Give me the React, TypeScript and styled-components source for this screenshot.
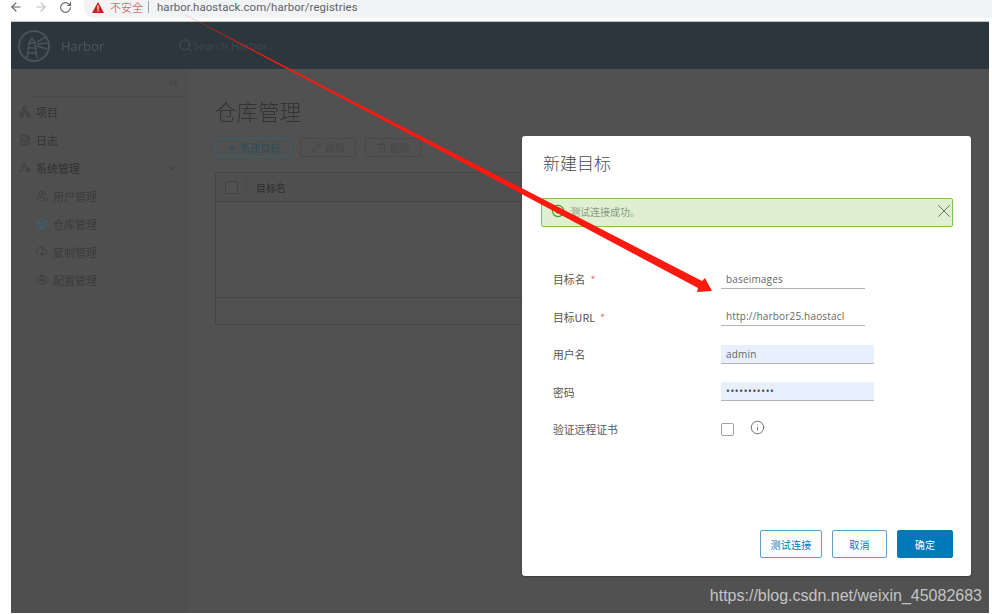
import React from 'react';
import styled, { createGlobalStyle } from 'styled-components';
import { ArrowLeft, ArrowRight, RotateCw, Search, ChevronsLeft, ChevronDown, Plus, Pencil, Trash2, X, Info, Network, FileText, Users, Box, CloudUpload, Settings, UserCog } from 'lucide-react';

const GlobalStyle = createGlobalStyle`
  html, body { margin: 0; padding: 0; background: #fff; }
  body { font-family: "Noto Sans CJK SC", "Noto Sans", sans-serif; overflow: hidden; }
  * { box-sizing: border-box; }
`;

const Screen = styled.div`
  position: relative;
  width: 992px;
  height: 614px;
  background: #fff;
  overflow: hidden;
`;

const BrowserBar = styled.div`
  display: flex;
  align-items: flex-start;
  height: 21px;
  padding-left: 9px;
  color: #5f6368;
`;

const NavButton = styled.span<{ $dim?: boolean }>`
  display: flex;
  width: 25px;
  height: 14px;
  align-items: center;
  color: ${(p) => (p.$dim ? '#bcbfc2' : '#5f6368')};
`;

const UrlPill = styled.div`
  display: flex;
  align-items: center;
  flex: 1;
  height: 18px;
  padding: 0 0 4px 8px;
  background: #f1f3f4;
  border-radius: 0 0 0 10px;
`;

const Warning = styled.span`
  color: #c5423e;
  font-size: 11px;
  font-weight: 300;
  margin-left: 6px;
`;

const UrlDivider = styled.span`
  width: 1px;
  height: 12px;
  margin: 0 8px 0 5px;
  background: #9aa0a6;
`;

const UrlText = styled.span`
  font-family: "Roboto", sans-serif;
  font-size: 11.4px;
  letter-spacing: 0.1px;
  color: #5f6368;
`;

const Frame = styled.div`
  height: 592px;
  margin: 0 3px 0 11px;
  background: #515151;
  border-top: 1px solid #c4c4c4;
  filter: blur(0.4px);
`;

const Header = styled.div`
  display: flex;
  align-items: center;
  height: 47px;
  padding-left: 6px;
  background: #2c373d;
  color: #4a5357;
`;

const Brand = styled.span`
  font-family: "Open Sans", sans-serif;
  font-size: 13px;
  margin-left: 10px;
  width: 117px;
  color: #4e565a;
`;

const SearchHint = styled.span`
  font-family: "Open Sans", sans-serif;
  font-size: 11px;
  color: #3e484e;
`;

const Body = styled.div`
  display: flex;
  height: 544px;
`;

const Sidebar = styled.div`
  width: 176px;
  height: 100%;
  background: #4f4f4f;
  border-right: 1px solid #4c4c4c;
  font-size: 11px;
  color: #323232;
`;

const Collapse = styled.div`
  display: flex;
  justify-content: flex-end;
  height: 28px;
  padding: 7px 6px 0 0;
  border-bottom: 1px solid #4a4a4a;
  margin-left: 16px;
  color: #363636;
`;

const NavList = styled.div`
  display: flex;
  flex-direction: column;
  padding-top: 0.5px;
`;

const NavItem = styled.div<{ $sub?: boolean }>`
  display: flex;
  align-items: center;
  gap: 5px;
  height: 28px;
  padding-left: ${(p) => (p.$sub ? '25px' : '8px')};
  color: ${(p) => (p.$sub ? '#3b3b3b' : '#323232')};
  svg { flex: none; color: #3c3c3c; }
`;

const NavCaret = styled.span`
  display: flex;
  margin-left: auto;
  padding-right: 8px;
`;

const Main = styled.div`
  flex: 1;
  padding: 27px 0 0 28px;
`;

const Title = styled.h1`
  margin: 0 0 12px;
  font-size: 21.5px;
  font-weight: 300;
  line-height: 30px;
  color: #333;
`;

const Toolbar = styled.div`
  display: flex;
  gap: 9px;
`;

const ToolButton = styled.span<{ $on?: boolean }>`
  display: flex;
  align-items: center;
  justify-content: center;
  gap: 3px;
  width: ${(p) => (p.$on ? '76px' : '56px')};
  height: 19px;
  border: 1px solid ${(p) => (p.$on ? '#38606f' : '#484848')};
  border-radius: 2px;
  font-size: 10px;
  color: ${(p) => (p.$on ? '#2c4e5c' : '#464646')};
`;

const Grid = styled.div`
  width: 700px;
  height: 153px;
  margin-top: 15px;
  border: 1px solid #474747;
  border-radius: 2px;
  border-right: 0;
`;

const GridHead = styled.div`
  display: flex;
  align-items: center;
  height: 29px;
  padding-left: 9px;
  background: #4f4f4f;
  border-bottom: 1px solid #464646;
  font-size: 10px;
  font-weight: 500;
  color: #333;
`;

const HeadDivider = styled.span`
  width: 1px;
  height: 18px;
  margin: 0 9px 0 8px;
  background: #484848;
`;

const HeadCheck = styled.span`
  width: 13px;
  height: 13px;
  border: 1px solid #414141;
  border-radius: 2px;
  background: #515151;
`;

const GridBody = styled.div`
  height: 96px;
  border-bottom: 1px solid #464646;
`;

const Dialog = styled.div`
  position: absolute;
  left: 522px;
  top: 136px;
  width: 449px;
  height: 440px;
  display: flex;
  flex-direction: column;
  padding: 15px 18px 18px 19px;
  background: #fff;
  border-radius: 3px;
  box-shadow: 0 1px 2px rgba(0, 0, 0, 0.3);
`;

const DialogTitle = styled.h2`
  margin: 0 0 23px 2px;
  font-size: 17px;
  font-weight: 300;
  line-height: 24px;
  color: #4a4a4a;
`;

const Alert = styled.div`
  display: flex;
  align-items: center;
  height: 29px;
  padding: 0 0 3px 9px;
  background: #dff0d0;
  border: 1px solid #7fc450;
  border-radius: 2px;
  font-size: 10px;
  color: #8a9a84;
  svg { flex: none; }
`;

const AlertText = styled.span`
  flex: 1;
  margin-left: 5px;
`;

const AlertClose = styled.span`
  display: flex;
  margin-right: -3px;
  color: #666;
`;

const Form = styled.div`
  display: flex;
  flex-direction: column;
  margin-top: 33.5px;
  padding-left: 12px;
`;

const Row = styled.div`
  display: flex;
  align-items: center;
  height: 37.5px;
  font-size: 10.8px;
  color: #565656;
`;

const Label = styled.label`
  width: 168px;
`;

const Star = styled.span`
  margin-left: 5px;
  color: #e8796c;
`;

const Input = styled.div<{ $filled?: boolean }>`
  display: flex;
  align-items: center;
  width: ${(p) => (p.$filled ? '153px' : '144px')};
  height: 19px;
  padding-left: 5px;
  background: ${(p) => (p.$filled ? '#e8f0fe' : '#fff')};
  border-bottom: 1px solid #b3b3b3;
  font-family: "Open Sans", sans-serif;
  font-size: 10px;
  letter-spacing: 0.17px;
  color: #666;
`;

const PasswordDots = styled.span`
  letter-spacing: 0.65px;
  color: #444;
`;

const Check = styled.span`
  width: 13px;
  height: 13px;
  border: 1px solid #a0a0a0;
  border-radius: 2px;
`;

const InfoMark = styled.span`
  display: flex;
  margin: -4px 0 0 16px;
  color: #555;
`;

const Footer = styled.div`
  display: flex;
  justify-content: flex-end;
  gap: 10px;
  margin-top: auto;
`;

const FootButton = styled.span<{ $primary?: boolean; $width: number }>`
  display: flex;
  align-items: center;
  justify-content: center;
  width: ${(p) => p.$width}px;
  height: 28px;
  border: 1px solid ${(p) => (p.$primary ? '#0079b8' : '#5ba3cc')};
  border-radius: 2px;
  background: ${(p) => (p.$primary ? '#0079b8' : '#fff')};
  color: ${(p) => (p.$primary ? '#fff' : '#0079b8')};
  font-size: 10px;
  letter-spacing: 0.3px;
`;

const Watermark = styled.div`
  position: absolute;
  right: 10px;
  bottom: 9px;
  font-family: "Liberation Sans", sans-serif;
  font-size: 16px;
  color: #c4c4c4;
`;

const ArrowLayer = styled.svg`
  position: absolute;
  left: 0;
  top: 0;
`;

const HarborLogo = () => (
  <svg width="34" height="34" viewBox="0 0 34 34" fill="none" stroke="currentColor">
    <circle cx="17" cy="17" r="15" strokeWidth="2" />
    <path d="M10 29l2-15h6l2 15M12 14l3-5 3 5M11.5 19h7M11 24h8" strokeWidth="1.5" />
    <path d="M20 13l9-5M20 15l11-1M20 17l10 3" strokeWidth="1.6" />
  </svg>
);

const subItems = [
  { icon: <Users size={12} />, label: '用户管理' },
  { icon: <Box size={12} color="#3a6478" />, label: '仓库管理' },
  { icon: <CloudUpload size={12} />, label: '复制管理' },
  { icon: <Settings size={12} />, label: '配置管理' },
];

const App = () => (
  <Screen>
    <GlobalStyle />
    <BrowserBar>
      <NavButton><ArrowLeft size={14} /></NavButton>
      <NavButton $dim><ArrowRight size={14} /></NavButton>
      <NavButton><RotateCw size={13} /></NavButton>
      <UrlPill>
        <svg width="12" height="11" viewBox="0 0 12 11">
          <path d="M6 0l6 11H0z" fill="#c5221f" />
          <rect x="5.4" y="3.5" width="1.2" height="4" fill="#fff" />
          <rect x="5.4" y="8.2" width="1.2" height="1.2" fill="#fff" />
        </svg>
        <Warning>不安全</Warning>
        <UrlDivider />
        <UrlText>harbor.haostack.com/harbor/registries</UrlText>
      </UrlPill>
    </BrowserBar>
    <Frame>
      <Header>
        <HarborLogo />
        <Brand>Harbor</Brand>
        <Search size={15} strokeWidth={1.4} />
        <SearchHint>Search Harbor...</SearchHint>
      </Header>
      <Body>
        <Sidebar>
          <Collapse><ChevronsLeft size={14} strokeWidth={1.3} /></Collapse>
          <NavList>
            <NavItem><Network size={12} />项目</NavItem>
            <NavItem><FileText size={12} />日志</NavItem>
            <NavItem>
              <UserCog size={12} />系统管理
              <NavCaret><ChevronDown size={12} /></NavCaret>
            </NavItem>
            {subItems.map((item) => (
              <NavItem $sub key={item.label}>{item.icon}{item.label}</NavItem>
            ))}
          </NavList>
        </Sidebar>
        <Main>
          <Title>仓库管理</Title>
          <Toolbar>
            <ToolButton $on><Plus size={12} />新建目标</ToolButton>
            <ToolButton><Pencil size={11} />编辑</ToolButton>
            <ToolButton><Trash2 size={11} />删除</ToolButton>
          </Toolbar>
          <Grid>
            <GridHead>
              <HeadCheck />
              <HeadDivider />
              目标名
            </GridHead>
            <GridBody />
          </Grid>
        </Main>
      </Body>
    </Frame>
    <Dialog>
      <DialogTitle>新建目标</DialogTitle>
      <Alert>
        <svg width="14" height="14" viewBox="0 0 14 14" fill="none" stroke="#4f9a20" strokeWidth="1.2">
          <circle cx="7" cy="7" r="5.6" />
          <path d="M4.5 7l2 2 3-3.5" />
        </svg>
        <AlertText>测试连接成功。</AlertText>
        <AlertClose><X size={22} strokeWidth={1} /></AlertClose>
      </Alert>
      <Form>
        <Row><Label>目标名<Star>*</Star></Label><Input>baseimages</Input></Row>
        <Row><Label>目标URL<Star>*</Star></Label><Input>http://harbor25.haostacl</Input></Row>
        <Row><Label>用户名</Label><Input $filled>admin</Input></Row>
        <Row><Label>密码</Label><Input $filled><PasswordDots>•••••••••••</PasswordDots></Input></Row>
        <Row>
          <Label>验证远程证书</Label>
          <Check />
          <InfoMark><Info size={15} strokeWidth={1.3} /></InfoMark>
        </Row>
      </Form>
      <Footer>
        <FootButton $width={62}>测试连接</FootButton>
        <FootButton $width={55}>取消</FootButton>
        <FootButton $primary $width={56}>确定</FootButton>
      </Footer>
    </Dialog>
    <ArrowLayer width="992" height="614" viewBox="0 0 992 614">
      <path d="M180 12L702 281L705 278L712 291L697 292L698 288Z" fill="#fb1a10" />
    </ArrowLayer>
    <Watermark>https://blog.csdn.net/weixin_45082683</Watermark>
  </Screen>
);

export default App;
